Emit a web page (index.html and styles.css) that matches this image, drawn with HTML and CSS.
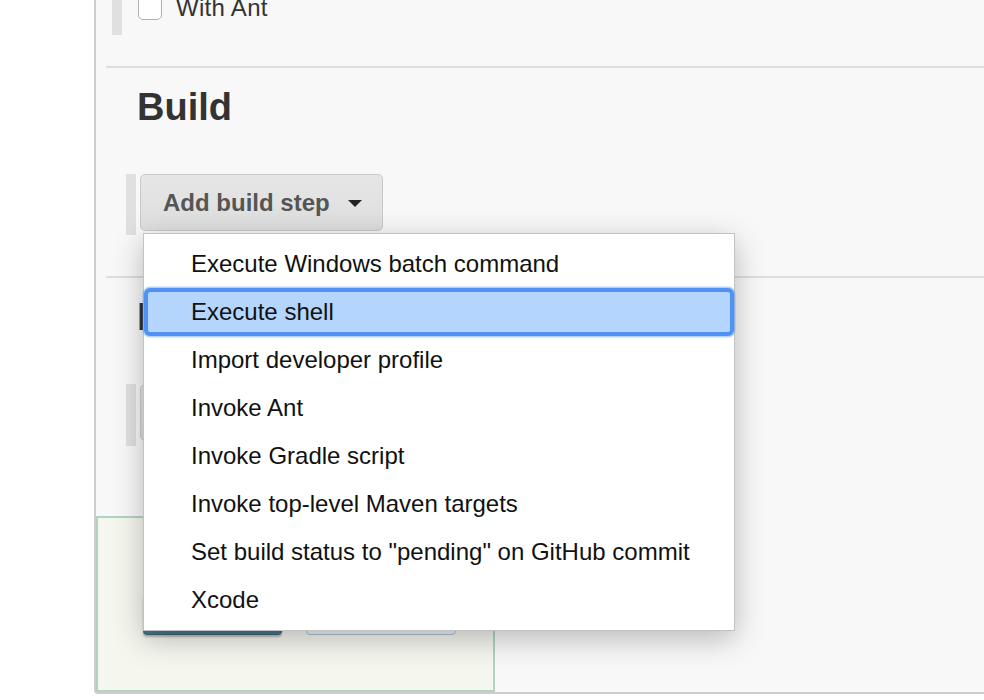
FILE: index.html
```html
<!DOCTYPE html>
<html lang="en">
<head>
<meta charset="utf-8">
<title>Build</title>
<link rel="stylesheet" href="styles.css">
</head>
<body>
<div class="panel">
  <div class="ant-row">
    <span class="checkbox"></span>
    <span class="ant-label">With Ant</span>
  </div>
  <div class="rule"></div>
  <h2 class="section-title">Build</h2>
  <div class="step-row">
    <div class="step-wrap">
      <button class="step-btn" type="button">Add build step
        <svg class="caret" width="14" height="8" viewBox="0 0 14 8"><path d="M0 0 H14 L7 7 Z" fill="#222"/></svg>
      </button>
      <ul class="menu">
        <li class="menu-item">Execute Windows batch command</li>
        <li class="menu-item active">Execute shell</li>
        <li class="menu-item">Import developer profile</li>
        <li class="menu-item">Invoke Ant</li>
        <li class="menu-item">Invoke Gradle script</li>
        <li class="menu-item">Invoke top-level Maven targets</li>
        <li class="menu-item">Set build status to "pending" on GitHub commit</li>
        <li class="menu-item">Xcode</li>
      </ul>
    </div>
  </div>
  <div class="rule"></div>
  <h2 class="section-title">Post-build Actions</h2>
  <div class="step-row post">
    <button class="step-btn" type="button">Add post-build action
      <svg class="caret" width="14" height="8" viewBox="0 0 14 8"><path d="M0 0 H14 L7 7 Z" fill="#222"/></svg>
    </button>
  </div>
  <div class="footer">
    <button class="save" type="button">Save</button>
    <button class="apply" type="button">Apply</button>
  </div>
</div>
</body>
</html>
```

FILE: styles.css
```css
html, body {
  margin: 0;
  padding: 0;
  background: #ffffff;
  font-family: "Liberation Sans", Arial, Helvetica, sans-serif;
  overflow: hidden;
}

.panel {
  display: flow-root;
  margin-left: 94px;
  background: #f8f8f8;
  border-left: 2px solid #cdcdcd;
  border-bottom: 2px solid #cdcdcd;
  border-bottom-left-radius: 4px;
  box-sizing: border-box;
}

.ant-row {
  margin-top: -20px;
  margin-left: 16px;
  height: 55px;
  border-left: 10px solid #e0e0e0;
  box-sizing: border-box;
  padding-left: 16px;
  padding-top: 16px;
  display: flex;
  align-items: flex-start;
  gap: 14px;
}

.checkbox {
  display: block;
  width: 22px;
  height: 22px;
  border: 1px solid #b0b0b0;
  border-radius: 5px;
  background: #fff;
  flex: none;
}

.ant-label {
  font-size: 24px;
  line-height: 24px;
  color: #333;
  letter-spacing: 0.3px;
}

.rule {
  margin-left: 10px;
  height: 2px;
  background: #dddddd;
}

.ant-row + .rule {
  margin-top: 31px;
}

.section-title {
  margin: 16px 0 0 41px;
  font-size: 38px;
  line-height: 46px;
  font-weight: bold;
  color: #333;
}

.step-row {
  margin-top: 44px;
  margin-left: 30px;
  border-left: 10px solid #e0e0e0;
  height: 61px;
  padding-left: 4px;
  box-sizing: border-box;
}

.step-row.post {
  height: 62px;
}

.step-row + .rule {
  margin-top: 41px;
}

.step-wrap {
  position: relative;
  display: inline-block;
}

.step-btn {
  display: flex;
  align-items: center;
  height: 57px;
  box-sizing: border-box;
  padding: 0 20px 0 22px;
  background: linear-gradient(#e6e6e6, #dedede);
  border: 1px solid #c9c9c9;
  border-radius: 5px;
  font-family: inherit;
  font-size: 24px;
  font-weight: bold;
  color: #555;
  gap: 18px;
  margin: 0;
}

.caret {
  display: block;
  margin-top: 2px;
}

.menu {
  position: absolute;
  left: 3px;
  top: 59px;
  width: 592px;
  box-sizing: border-box;
  margin: 0;
  padding: 6px 0;
  list-style: none;
  background: #fff;
  border: 1px solid #c2c2c2;
  box-shadow: 0 8px 28px rgba(0, 0, 0, 0.26);
  z-index: 10;
}

.menu-item {
  height: 48px;
  line-height: 48px;
  padding-left: 47px;
  font-size: 24px;
  color: #111;
  white-space: nowrap;
}

.menu-item.active {
  background: #b4d5fd;
  border-radius: 6px;
  box-shadow: inset 0 0 0 4px #4f91f5, 0 0 0 1.5px rgba(78, 144, 244, 0.4);
}

.footer {
  margin-top: 70px;
  height: 176px;
  box-sizing: border-box;
  width: 399px;
  background: #f5f6ee;
  border: 2px solid #b2d3c2;
  padding: 77px 0 0 45px;
  display: flex;
  gap: 24px;
  align-items: flex-start;
}

.save, .apply {
  height: 40px;
  border-radius: 4px;
  font-family: inherit;
  font-size: 20px;
  margin: 0;
}

.save {
  width: 139px;
  background: #4b758b;
  border: 1px solid #3d6275;
  color: #fff;
  box-shadow: 0 2px 2px rgba(0,0,0,0.25);
}

.apply {
  width: 150px;
  background: #eef3f8;
  border: 1px solid #aac0d6;
  color: #204a87;
}
```
